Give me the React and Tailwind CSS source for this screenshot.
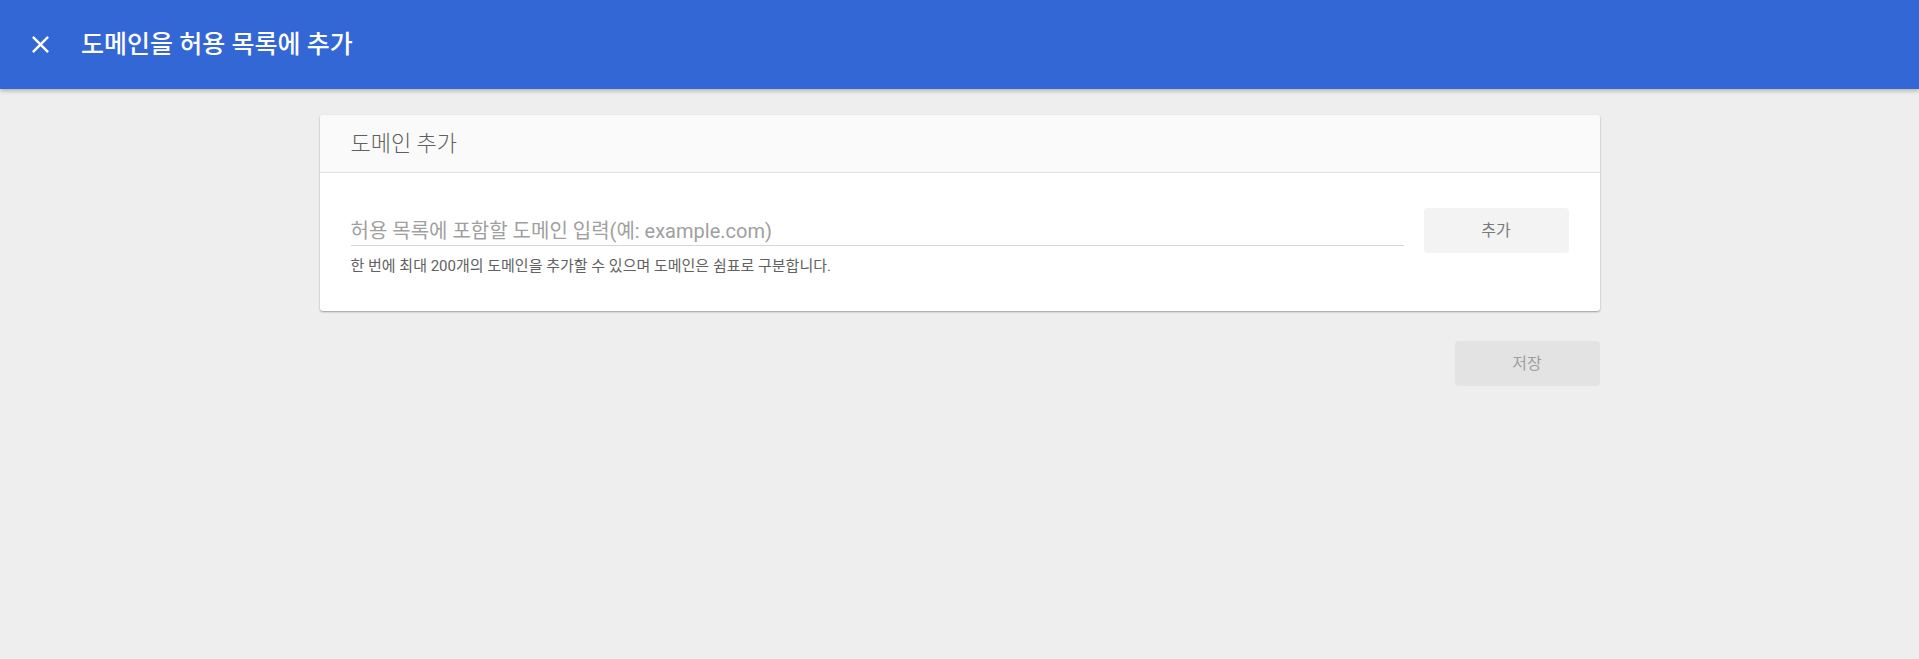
import React from "react";

export default function App() {
  return (
    <div
      className="min-h-[659px] w-full bg-[#eeeeee]"
      style={{ fontFamily: 'Roboto, "Noto Sans CJK KR", "Noto Sans", sans-serif' }}
    >
      <header className="relative z-10 flex h-[89px] items-center bg-[#3367d6] shadow-[0_2px_4px_rgba(0,0,0,0.25)]">
        <button className="ml-[26px] flex h-[29px] w-[29px] items-center justify-center text-white">
          <svg width="29" height="29" viewBox="0 0 24 24" fill="currentColor">
            <path d="M19 6.41L17.59 5 12 10.59 6.41 5 5 6.41 10.59 12 5 17.59 6.41 19 12 13.41 17.59 19 19 17.59 13.41 12z" />
          </svg>
        </button>
        <h1 className="ml-[26px] text-[25px] font-medium text-white">도메인을 허용 목록에 추가</h1>
      </header>

      <main className="mx-auto w-[1280px] pt-[26px]">
        <section className="rounded-[3px] bg-white shadow-[0_1px_2px_rgba(0,0,0,0.35)]">
          <div className="flex h-[58px] items-center rounded-t-[3px] border-b border-[#e0e0e0] bg-[#fafafa] px-[31px]">
            <h2 className="text-[22px] font-light text-[#5f5f5f]">도메인 추가</h2>
          </div>
          <div className="px-[31px] pb-[35px] pt-[35px]">
            <div className="flex items-start gap-[20px]">
              <div className="flex-1 pt-[10px]">
                <div className="border-b border-[#d6d6d6] pb-[1px] text-[20px] leading-[26px] text-[#a0a0a0]">
                  허용 목록에 포함할 도메인 입력(예: example.com)
                </div>
                <p className="mt-[10px] text-[15px] leading-[20px] text-[#616161]">
                  한 번에 최대 200개의 도메인을 추가할 수 있으며 도메인은 쉼표로 구분합니다.
                </p>
              </div>
              <button className="h-[45px] w-[145px] rounded-[4px] bg-[#f3f3f3] text-[16px] text-[#7a7a7a]">
                추가
              </button>
            </div>
          </div>
        </section>
        <div className="mt-[30px] flex justify-end">
          <button className="h-[45px] w-[145px] rounded-[4px] bg-[#e3e3e3] text-[16px] text-[#9e9e9e]">
            저장
          </button>
        </div>
      </main>
    </div>
  );
}
